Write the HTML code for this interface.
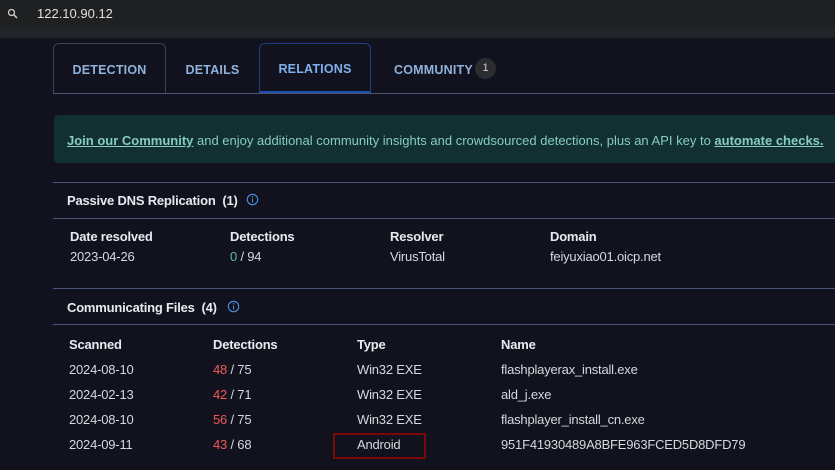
<!DOCTYPE html><html><head><style>
body{margin:0;width:835px;height:470px;overflow:hidden;background:#11121d;font-family:"Liberation Sans",sans-serif;color:#d6d8de;position:relative}
.a{position:absolute;white-space:nowrap}
.t{font-size:13px;letter-spacing:-0.2px}
.h{font-weight:bold;color:#e8eaef}
.line{position:absolute;left:53px;right:0;height:1px;background:#4a5578}
.tab{position:absolute;top:43px;height:50px;box-sizing:border-box;font-size:12.5px;font-weight:bold;color:#8fb2dc;display:flex;align-items:center;justify-content:center;letter-spacing:0.2px;border:1px solid transparent;border-bottom:none;padding-top:2px}
.red{color:#f25a5a}
</style></head><body>
<div class="a" style="left:0;top:0;width:835px;height:28px;background:#1f2022"></div>
<div class="a" style="left:0;top:28px;width:835px;height:10px;background:#212428"></div>
<svg class="a" style="left:7px;top:8px" width="12" height="12" viewBox="0 0 12 12"><circle cx="4.5" cy="4.5" r="3" fill="none" stroke="#ccc" stroke-width="1.3"/><line x1="6.8" y1="6.8" x2="10" y2="10" stroke="#ccc" stroke-width="1.5"/></svg>
<div class="a" style="left:37px;top:6px;font-size:13px;color:#e0e0e0">122.10.90.12</div>
<div class="tab" style="left:53px;width:113px;border-color:#3c4258;border-radius:6px 6px 0 0">DETECTION</div>
<div class="tab" style="left:166px;width:93px">DETAILS</div>
<div class="tab" style="left:259px;width:112px;border-color:#1c3f8c;border-bottom:2px solid #1c4fb0;border-radius:6px 6px 0 0;color:#7fb0ee;padding-top:3px">RELATIONS</div>
<div class="tab" style="left:393px;width:80px;justify-content:flex-start">COMMUNITY</div>
<div class="a" style="left:475px;top:58px;width:21px;height:21px;border-radius:50%;background:#2a2c30;color:#ccc;font-size:11px;text-align:center;line-height:21px">1</div>
<div class="a" style="left:53px;top:93px;right:0;height:1px;background:#4a5578"></div>
<div class="a" style="left:54px;top:115px;right:0;height:48px;background:#11302f;border-radius:4px 0 0 4px"></div>
<div class="a" style="left:67px;top:133px;color:#86cbc6;letter-spacing:0px;font-size:13px"><b style="text-decoration:underline">Join our Community</b> and enjoy additional community insights and crowdsourced detections, plus an API key to <b style="text-decoration:underline">automate checks.</b></div>
<div class="line" style="top:182px"></div>
<div class="a t h" style="left:67px;top:193px">Passive DNS Replication&nbsp; (1)</div>
<svg class="a" style="left:246px;top:193px" width="13" height="13"><circle cx="6.5" cy="6.5" r="5.2" fill="none" stroke="#4a8fe0" stroke-width="1.1"/><line x1="6.5" y1="5.5" x2="6.5" y2="9.5" stroke="#4a8fe0"/><circle cx="6.5" cy="3.8" r=".7" fill="#4a8fe0"/></svg>
<div class="line" style="top:218px"></div>
<div class="a t h" style="left:70px;top:229px">Date resolved</div>
<div class="a t h" style="left:230px;top:229px">Detections</div>
<div class="a t h" style="left:390px;top:229px">Resolver</div>
<div class="a t h" style="left:550px;top:229px">Domain</div>
<div class="a t" style="left:70px;top:249px">2023-04-26</div>
<div class="a t" style="left:230px;top:249px"><span style="color:#5fb8b0">0</span> / 94</div>
<div class="a t" style="left:390px;top:249px">VirusTotal</div>
<div class="a t" style="left:550px;top:249px">feiyuxiao01.oicp.net</div>
<div class="line" style="top:288px"></div>
<div class="a t h" style="left:67px;top:300px">Communicating Files&nbsp; (4)</div>
<svg class="a" style="left:227px;top:300px" width="13" height="13"><circle cx="6.5" cy="6.5" r="5.2" fill="none" stroke="#4a8fe0" stroke-width="1.1"/><line x1="6.5" y1="5.5" x2="6.5" y2="9.5" stroke="#4a8fe0"/><circle cx="6.5" cy="3.8" r=".7" fill="#4a8fe0"/></svg>
<div class="line" style="top:324px"></div>
<div class="a t h" style="left:69px;top:337px">Scanned</div>
<div class="a t h" style="left:213px;top:337px">Detections</div>
<div class="a t h" style="left:357px;top:337px">Type</div>
<div class="a t h" style="left:501px;top:337px">Name</div>
<div class="a t" style="left:69px;top:362px">2024-08-10</div><div class="a t" style="left:213px;top:362px"><span class="red">48</span> / 75</div><div class="a t" style="left:357px;top:362px">Win32 EXE</div><div class="a t" style="left:501px;top:362px">flashplayerax_install.exe</div>
<div class="a t" style="left:69px;top:387px">2024-02-13</div><div class="a t" style="left:213px;top:387px"><span class="red">42</span> / 71</div><div class="a t" style="left:357px;top:387px">Win32 EXE</div><div class="a t" style="left:501px;top:387px">ald_j.exe</div>
<div class="a t" style="left:69px;top:412px">2024-08-10</div><div class="a t" style="left:213px;top:412px"><span class="red">56</span> / 75</div><div class="a t" style="left:357px;top:412px">Win32 EXE</div><div class="a t" style="left:501px;top:412px">flashplayer_install_cn.exe</div>
<div class="a t" style="left:69px;top:437px">2024-09-11</div><div class="a t" style="left:213px;top:437px"><span class="red">43</span> / 68</div><div class="a t" style="left:357px;top:437px">Android</div><div class="a t" style="left:501px;top:437px">951F41930489A8BFE963FCED5D8DFD79</div>
<div class="a" style="left:333px;top:433px;width:89px;height:22px;border:2px solid #7a0808"></div>
</body></html>
